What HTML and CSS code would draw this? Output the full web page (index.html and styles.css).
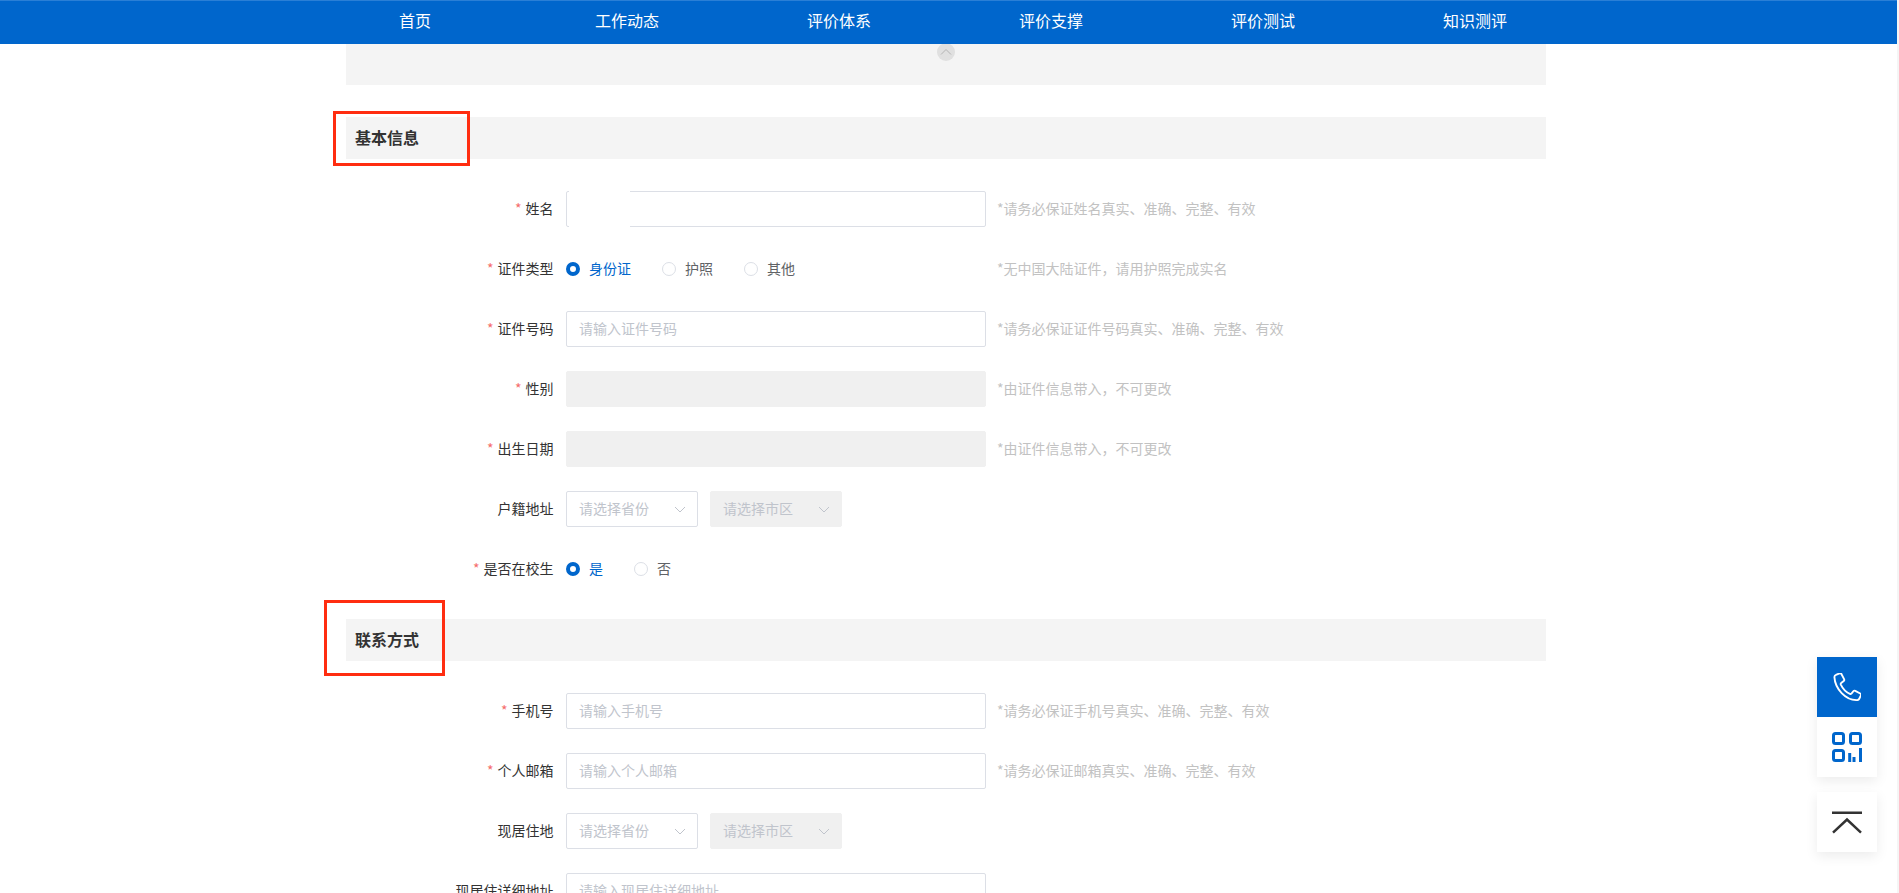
FILE: index.html
```html
<!DOCTYPE html>
<html lang="zh-CN">
<head>
<meta charset="utf-8">
<title>基本信息</title>
<link rel="stylesheet" href="styles.css">
</head>
<body>
<header class="nav">
  <nav class="nav-list">
    <a class="nav-item">首页</a>
    <a class="nav-item">工作动态</a>
    <a class="nav-item">评价体系</a>
    <a class="nav-item">评价支撑</a>
    <a class="nav-item">评价测试</a>
    <a class="nav-item">知识测评</a>
  </nav>
</header>
<main class="page">
  <div class="panel">
    <span class="collapse">
      <svg width="12" height="8" viewBox="0 0 12 8"><path d="M1 6.500l5-5 5 5" fill="none" stroke="#b4b4b4" stroke-width="1"/></svg>
    </span>
  </div>

  <section class="section first">
    <div class="section-head"><h2 class="section-title">基本信息</h2><span class="mark mark-a"></span></div>
    <div class="row">
      <label class="label"><i class="req">*</i>姓名</label>
      <div class="field"><input class="input" type="text"><span class="mask"></span></div>
      <span class="hint">*请务必保证姓名真实、准确、完整、有效</span>
    </div>
    <div class="row">
      <label class="label"><i class="req">*</i>证件类型</label>
      <div class="radios field">
        <span class="radio on"><b class="dot"></b>身份证</span>
        <span class="radio"><b class="dot"></b>护照</span>
        <span class="radio"><b class="dot"></b>其他</span>
      </div>
      <span class="hint">*无中国大陆证件，请用护照完成实名</span>
    </div>
    <div class="row">
      <label class="label"><i class="req">*</i>证件号码</label>
      <div class="field"><input class="input" type="text" placeholder="请输入证件号码"></div>
      <span class="hint">*请务必保证证件号码真实、准确、完整、有效</span>
    </div>
    <div class="row">
      <label class="label"><i class="req">*</i>性别</label>
      <div class="field"><input class="input disabled" type="text" disabled></div>
      <span class="hint">*由证件信息带入，不可更改</span>
    </div>
    <div class="row">
      <label class="label"><i class="req">*</i>出生日期</label>
      <div class="field"><input class="input disabled" type="text" disabled></div>
      <span class="hint">*由证件信息带入，不可更改</span>
    </div>
    <div class="row">
      <label class="label">户籍地址</label>
      <div class="selects">
        <div class="select">请选择省份<svg class="chev" width="12" height="7" viewBox="0 0 12 7"><path d="M1 1l5 5 5-5" fill="none" stroke="#c0c4cc" stroke-width="1"/></svg></div>
        <div class="select off">请选择市区<svg class="chev" width="12" height="7" viewBox="0 0 12 7"><path d="M1 1l5 5 5-5" fill="none" stroke="#c0c4cc" stroke-width="1"/></svg></div>
      </div>
    </div>
    <div class="row">
      <label class="label"><i class="req">*</i>是否在校生</label>
      <div class="radios field">
        <span class="radio on"><b class="dot"></b>是</span>
        <span class="radio"><b class="dot"></b>否</span>
      </div>
    </div>
  </section>

  <section class="section second">
    <div class="section-head"><h2 class="section-title">联系方式</h2><span class="mark mark-b"></span></div>
    <div class="row">
      <label class="label"><i class="req">*</i>手机号</label>
      <div class="field"><input class="input" type="text" placeholder="请输入手机号"></div>
      <span class="hint">*请务必保证手机号真实、准确、完整、有效</span>
    </div>
    <div class="row">
      <label class="label"><i class="req">*</i>个人邮箱</label>
      <div class="field"><input class="input" type="text" placeholder="请输入个人邮箱"></div>
      <span class="hint">*请务必保证邮箱真实、准确、完整、有效</span>
    </div>
    <div class="row">
      <label class="label">现居住地</label>
      <div class="selects">
        <div class="select">请选择省份<svg class="chev" width="12" height="7" viewBox="0 0 12 7"><path d="M1 1l5 5 5-5" fill="none" stroke="#c0c4cc" stroke-width="1"/></svg></div>
        <div class="select off">请选择市区<svg class="chev" width="12" height="7" viewBox="0 0 12 7"><path d="M1 1l5 5 5-5" fill="none" stroke="#c0c4cc" stroke-width="1"/></svg></div>
      </div>
    </div>
    <div class="row">
      <label class="label">现居住详细地址</label>
      <div class="field"><input class="input" type="text" placeholder="请输入现居住详细地址"></div>
    </div>
  </section>
</main>

<aside class="float">
  <div class="float-group">
    <a class="float-btn blue">
      <svg class="phone" width="28" height="28" viewBox="3.700 2 24 24"><path d="M6.200 3.600 9.300 2.300c.7-.3 1.300 0 1.600.600l2.300 4.300c.3.600.2 1.200-.3 1.600l-2.200 1.800c-.4.300-.5.800-.3 1.300 1.500 3.200 4.200 6.300 7.800 8 .5.200 1 .1 1.300-.3l1.700-2c.4-.5 1-.6 1.600-.3l4.200 2.300c.7.400.9 1 .6 1.700l-1.400 2.800c-.4.800-1.100 1.200-2 1.100C14.500 25.400 5.500 15.500 4.900 5.500c0-.9.400-1.600 1.300-1.900Z" fill="none" stroke="#fff" stroke-width="1.600" stroke-linejoin="round"/></svg>
    </a>
    <a class="float-btn">
      <svg width="30" height="30" viewBox="0 0 30 30" fill="none" stroke="#0066cc" stroke-width="3"><rect x="1.500" y="1.500" width="10" height="10" rx="2"/><rect x="18.500" y="1.500" width="10" height="10" rx="2"/><rect x="1.500" y="18.500" width="10" height="10" rx="2"/><path d="M17.700 21v9M22 25v5M28.500 16v14"/></svg>
    </a>
  </div>
  <a class="float-btn">
    <svg width="30" height="24" viewBox="0 0 30 24" fill="none" stroke="#333" stroke-width="2.500"><path d="M0 2.700h30M1 22.700 15 9.500l14 13.200"/></svg>
  </a>
</aside>
</body>
</html>
```
FILE: styles.css
```css
* { box-sizing: border-box; }
html, body { height: 100%; }
body {
  margin: 0;
  overflow: hidden;
  background: #fff;
  color: #333;
  font-family: "Noto Sans CJK SC", "Noto Sans", sans-serif;
  font-size: 14px;
}
body::after {
  content: "";
  position: fixed;
  right: 0;
  top: 0;
  bottom: 0;
  z-index: 3;
  width: 2px;
  background: #f5f5f5;
}
.nav {
  height: 44px;
  background: #0066cc;
  border-top: 1px solid #2a7fd6;
  position: relative;
  z-index: 2;
}
.nav-list {
  width: 1272px;
  margin-left: 309px;
  display: flex;
}
.nav-item {
  flex: 0 0 212px;
  text-align: center;
  line-height: 39px;
  font-size: 16px;
  color: #fff;
}
.page {
  width: 1200px;
  margin-left: 346px;
}
.panel {
  height: 41px;
  background: #f4f4f4;
  display: flex;
  justify-content: center;
  position: relative;
}
.collapse {
  width: 18px;
  height: 18px;
  margin-top: -1px;
  border-radius: 50%;
  background: #e0e0e0;
  display: flex;
  align-items: center;
  justify-content: center;
}
.section.first { margin-top: 32px; }
.section.second { margin-top: 32px; }
.section-head {
  height: 42px;
  background: #f4f4f4;
  margin-bottom: 32px;
  padding: 0 0 2px 9px;
  position: relative;
  display: flex;
  align-items: center;
}
.section-title {
  margin: 0;
  font-size: 16px;
  font-weight: 700;
  color: #333;
}
.mark {
  position: absolute;
  border: 3px solid #ff2d10;
}
.mark-a { left: -13px; top: -6px; width: 137px; height: 55px; }
.mark-b { left: -22px; top: -19px; width: 121px; height: 76px; }
.row {
  display: flex;
  align-items: center;
  height: 36px;
  margin-bottom: 24px;
}
.label {
  width: 220px;
  padding: 0 12.500px 2px 0;
  text-align: right;
  color: #333;
  white-space: nowrap;
}
.req {
  font-style: normal;
  color: #f56c6c;
  margin-right: 4px;
}
.field {
  width: 420px;
  height: 36px;
  position: relative;
}
.input {
  display: block;
  width: 100%;
  height: 36px;
  padding: 0 12px 2px;
  border: 1px solid #dcdfe6;
  border-radius: 2px;
  background: #fff;
  outline: 0;
  font: inherit;
  color: #333;
}
.input::placeholder { color: #c0c4cc; opacity: 1; }
.input.disabled { background: #f0f0f0; border-color: #f0f0f0; }
.mask {
  position: absolute;
  left: 3px;
  top: -1px;
  width: 61px;
  height: 38px;
  background: #fff;
}
.hint {
  margin-left: 11px;
  padding-bottom: 2px;
  color: #c2c2c2;
  white-space: nowrap;
}
.radios {
  display: flex;
  align-items: center;
  gap: 31px;
}
.radio {
  display: flex;
  align-items: center;
  gap: 9px;
  color: #606266;
  line-height: 20px;
  padding-bottom: 2px;
}
.radio.on { color: #0066cc; }
.dot {
  width: 14px;
  height: 14px;
  border-radius: 50%;
  border: 1px solid #dcdfe6;
  background: #fff;
  position: relative;
  top: 1px;
}
.radio.on .dot {
  border: 4.500px solid #0066cc;
}
.selects {
  display: flex;
  gap: 12px;
}
.select {
  width: 132px;
  height: 36px;
  padding: 0 11px 2px 12px;
  border: 1px solid #dcdfe6;
  border-radius: 2px;
  color: #c0c4cc;
  display: flex;
  align-items: center;
  justify-content: space-between;
}
.chev { position: relative; top: 1px; }
.select.off {
  background: #f0f0f0;
  border-color: #f0f0f0;
}
.float {
  position: fixed;
  left: 1817px;
  top: 657px;
  display: flex;
  flex-direction: column;
  gap: 15px;
}
.float-group {
  display: flex;
  flex-direction: column;
  box-shadow: 0 4px 12px rgba(0, 0, 0, .08);
}
.float-btn {
  width: 60px;
  height: 60px;
  background: #fff;
  display: flex;
  align-items: center;
  justify-content: center;
}
.float > .float-btn { box-shadow: 0 4px 12px rgba(0, 0, 0, .08); }
.float-btn.blue { background: #0066cc; }
```
